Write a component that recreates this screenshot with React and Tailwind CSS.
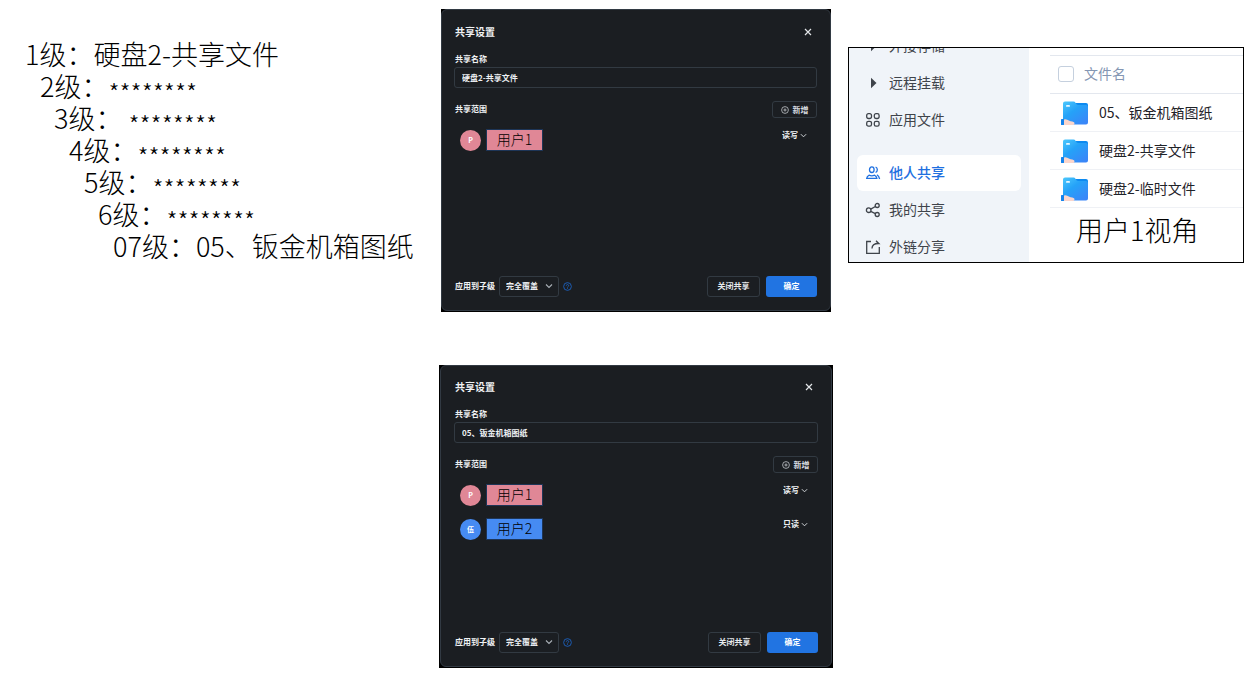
import React from "react";

const LEVELS = [
  { label: "1级：", value: "硬盘2-共享文件", indent: "pl-0" },
  { label: "2级：", stars: true, indent: "pl-[15px]" },
  { label: "3级：", stars: true, indent: "pl-[29px]", gap: "ml-1.5" },
  { label: "4级：", stars: true, indent: "pl-[44px]" },
  { label: "5级：", stars: true, indent: "pl-[59px]" },
  { label: "6级：", stars: true, indent: "pl-[73px]" },
  { label: "07级：", value: "05、钣金机箱图纸", indent: "pl-[88px]" },
];

function LevelList() {
  return (
    <ul className="pl-[25px] pt-[38px] text-[27px] leading-8 font-light text-black">
      {LEVELS.map((l) => (
        <li key={l.label} className={`flex whitespace-nowrap ${l.indent}`}>
          <span>{l.label}</span>
          {l.stars ? (
            <span className={`mt-3 h-5 text-[25px] leading-5 ${l.gap || ""}`}>********</span>
          ) : (
            <span>{l.value}</span>
          )}
        </li>
      ))}
    </ul>
  );
}

function Chevron({ className }) {
  return (
    <svg viewBox="0 0 8 8" className={className} fill="none" stroke="currentColor" strokeWidth="1.1" aria-hidden="true">
      <path d="M1 2.5 4 5.5 7 2.5" />
    </svg>
  );
}

function UserRow({ user }) {
  return (
    <li className="flex h-[34px] items-start justify-between">
      <div className="flex items-start">
        <span className={`mt-px flex size-[21px] items-center justify-center rounded-full text-[7px] font-bold text-white ${user.avatarClass}`}>
          {user.initial}
        </span>
        <span className={`ml-[5px] flex h-[22px] w-[57px] items-center justify-center border border-[#1d3557] pb-0.5 text-sm leading-none font-light text-black ${user.tagClass}`}>
          {user.name}
        </span>
      </div>
      <div className="relative mr-2.5 flex h-3 items-center">
        <select
          aria-label={`${user.name} 权限`}
          defaultValue={user.access}
          className="block h-3 w-[25px] appearance-none bg-transparent text-[8px] leading-3 font-bold text-[#eef1f4] outline-none"
        >
          <option>读写</option>
          <option>只读</option>
        </select>
        <Chevron className="pointer-events-none absolute top-[3px] right-0 size-[7px] text-[#d5dade]" />
      </div>
    </li>
  );
}

function ShareDialog({ id, name, users, className, panelClass }) {
  return (
    <section aria-labelledby={`${id}-title`} className={`bg-black ${className}`}>
      <div className={`flex h-full flex-col rounded-md border border-[#323a43] bg-[#1b1e22] ${panelClass}`}>
        <header className="flex h-[15px] items-center justify-between">
          <h2 id={`${id}-title`} className="pl-px text-[10px] leading-[15px] font-bold text-[#f0f2f4]">共享设置</h2>
          <button type="button" aria-label="关闭" className="mr-[5px] text-[#e3e6e9]">
            <svg viewBox="0 0 8 8" className="size-2" stroke="currentColor" strokeWidth="1.2" aria-hidden="true">
              <path d="M1 1 7 7M7 1 1 7" />
            </svg>
          </button>
        </header>
        <label htmlFor={`${id}-name`} className="mt-3.5 pl-px text-[8px] leading-3 font-bold text-[#f0f2f4]">共享名称</label>
        <input
          id={`${id}-name`}
          defaultValue={name}
          className="mt-0.5 h-[21px] w-full rounded-[3px] border border-[#323a42] bg-transparent px-[7px] text-[8px] font-bold text-[#eef1f4] outline-none"
        />
        <div className="mt-[13px] flex items-center justify-between">
          <h3 className="pb-0.5 pl-px text-[8px] leading-3 font-bold text-[#f0f2f4]">共享范围</h3>
          <button type="button" className="flex h-[17px] w-[45px] items-center justify-center gap-1 rounded-[3px] border border-[#323a42] text-[8px] leading-none font-bold text-[#d9dde1]">
            <svg viewBox="0 0 8 8" className="size-2" fill="none" stroke="currentColor" strokeWidth="0.7" aria-hidden="true">
              <circle cx="4" cy="4" r="3.4" />
              <path d="M4 2.4v3.2M2.4 4h3.2" />
            </svg>
            新增
          </button>
        </div>
        <ul className="mt-[11px] pl-1.5">
          {users.map((u) => (
            <UserRow key={u.name} user={u} />
          ))}
        </ul>
        <footer className="mt-auto flex h-[21px] items-center">
          <label htmlFor={`${id}-apply`} className="pb-0.5 pl-px text-[8px] font-bold text-[#f0f2f4]">应用到子级</label>
          <div className="relative ml-1">
            <select
              id={`${id}-apply`}
              className="block h-[21px] w-[60px] appearance-none rounded-[3px] border border-[#323a42] bg-transparent pb-0.5 pl-1.5 text-[8px] font-bold text-[#eef1f4] outline-none"
            >
              <option>完全覆盖</option>
            </select>
            <Chevron className="pointer-events-none absolute top-1.5 right-1.5 size-2 text-[#a9b0b7]" />
          </div>
          <button type="button" aria-label="帮助" className="ml-1 text-[#1d62bf]">
            <svg viewBox="0 0 10 10" className="size-[9px]" fill="none" stroke="currentColor" strokeWidth="1" aria-hidden="true">
              <circle cx="5" cy="5" r="4.3" />
              <path d="M3.7 4a1.3 1.3 0 1 1 2 1.100Q5 5.500 5 6.100M5 6.900v.8" />
            </svg>
          </button>
          <button type="button" className="ml-auto h-[21px] w-[53px] rounded-[3px] border border-[#323a42] pb-0.5 text-[8px] font-bold text-[#e6e9ec]">关闭共享</button>
          <button type="button" className="ml-1.5 h-[21px] w-[51px] rounded-[3px] bg-[#2174e2] pb-0.5 text-[8px] font-bold text-white">确定</button>
        </footer>
      </div>
    </section>
  );
}

const ICONS = {
  caret: <path d="M6 2.800 11.500 8l-5.500 5.200z" fill="currentColor" stroke="none" />,
  apps: (
    <>
      <rect x="1.700" y="1.700" width="4.800" height="4.800" rx="1.700" />
      <rect x="9.300" y="1.700" width="4.800" height="4.800" rx="1.700" />
      <rect x="1.700" y="9.300" width="4.800" height="4.800" rx="1.700" />
      <rect x="9.300" y="9.300" width="4.800" height="4.800" rx="1.700" />
    </>
  ),
  people: (
    <>
      <ellipse cx="6.800" cy="4.700" rx="2.300" ry="2.800" />
      <path d="M1.700 13.400c.2-1.500.9-2.400 2.300-3.200q2.800 1.300 5.600 0c1.400.8 2.100 1.700 2.300 3.200z" />
      <path d="M10.600 2c2.300 1 2.300 4.600 0 5.500M11.900 9.800c1.600.9 2.300 2.200 2.700 4.200" />
    </>
  ),
  share: (
    <>
      <circle cx="3.700" cy="8.200" r="2.300" />
      <circle cx="12.200" cy="3.500" r="2" />
      <circle cx="12.200" cy="12.500" r="2" />
      <path d="m5.700 7.100 4.700-2.600M5.700 9.300l4.700 2.300" />
    </>
  ),
  link: (
    <>
      <path d="M6 2.500H1.700v11.800h12.600V8" />
      <path d="M7 9.500c0-3.200 1.500-5 6.500-5M11 1.700l2.900 2.800H11" />
    </>
  ),
};

function NavItem({ icon, label, active }) {
  return (
    <a
      href="#"
      aria-current={active ? "page" : undefined}
      className={`flex h-9 shrink-0 items-center gap-2 rounded-md pl-2 text-sm ${active ? "bg-white font-medium text-[#1f70e0]" : "text-[#3f444b]"}`}
    >
      <svg viewBox="0 0 16 16" className="size-4" fill="none" stroke="currentColor" strokeWidth="1.300" aria-hidden="true">
        {ICONS[icon]}
      </svg>
      <span className="pb-0.5">{label}</span>
    </a>
  );
}

function FolderIcon() {
  return (
    <svg viewBox="0 0 28 26" className="h-[26px] w-7" aria-hidden="true">
      <defs>
        <linearGradient id="folder" x1="0" y1="0" x2="0.8" y2="1">
          <stop offset="0" stopColor="#4cc8fc" />
          <stop offset="0.450" stopColor="#25a2f8" />
          <stop offset="1" stopColor="#3a86f8" />
        </linearGradient>
      </defs>
      <path d="M14 3h11q2 0 2 2V12H14z" fill="#0d8af0" />
      <path d="M4 1.500h8.500q1.300 0 2 1.200l1 1.500q.6.800 1.700.8h7.800q2 0 2 2v15.500q0 2-2 2H4q-2 0-2-2V3.500q0-2 2-2z" fill="url(#folder)" />
      <rect x="5" y="5" width="4" height="1.800" rx=".9" fill="#e8f8ff" />
      <rect x="0" y="19" width="3" height="6" rx=".6" fill="#1583ec" />
      <path d="M3 19.600q1.500-.8 3.200.2l3.300 1.500q4 .3 4 2.100t-2.500 1.600h-8z" fill="#fbd6cc" />
    </svg>
  );
}

const FILES = ["05、钣金机箱图纸", "硬盘2-共享文件", "硬盘2-临时文件"];

function FileBrowser() {
  return (
    <section aria-label="用户1视角" className="mt-[47px] flex h-[216px] overflow-hidden border border-black bg-white">
      <nav className="flex w-[180px] shrink-0 flex-col bg-[#f0f4f9] px-2">
        <div className="-mt-5 flex flex-col gap-px">
          <NavItem icon="caret" label="外接存储" />
          <NavItem icon="caret" label="远程挂载" />
          <NavItem icon="apps" label="应用文件" />
        </div>
        <div className="mt-[17px] flex flex-col gap-px">
          <NavItem icon="people" label="他人共享" active />
          <NavItem icon="share" label="我的共享" />
          <NavItem icon="link" label="外链分享" />
        </div>
      </nav>
      <div className="min-w-0 flex-1 pt-[7px] pl-[21px]">
        <table className="w-full border-collapse text-left text-sm whitespace-nowrap">
          <thead>
            <tr className="h-[38px] border-y border-[#e3e7ee]">
              <th className="p-0 font-normal text-[#8496b3]">
                <label className="flex items-center gap-2.5 pb-px pl-2">
                  <input type="checkbox" className="size-4 appearance-none rounded-[3px] border border-[#c5d0de] bg-white" />
                  <span className="pb-0.5">文件名</span>
                </label>
              </th>
            </tr>
          </thead>
          <tbody>
            {FILES.map((f) => (
              <tr key={f} className="h-[38px] border-b border-[#eff1f5]">
                <td className="p-0 text-[#1f2329]">
                  <div className="flex items-center gap-2.5 pl-[11px]">
                    <FolderIcon />
                    <span className="pb-0.5">{f}</span>
                  </div>
                </td>
              </tr>
            ))}
          </tbody>
        </table>
        <p className="mt-1.5 pl-[26px] text-[27px] leading-8 font-light whitespace-nowrap text-black">用户1视角</p>
      </div>
    </section>
  );
}

const USER1 = { name: "用户1", initial: "P", access: "读写", avatarClass: "bg-[#e08796]", tagClass: "bg-[#e08796]" };
const USER2 = { name: "用户2", initial: "伍", access: "只读", avatarClass: "bg-[#468bf2]", tagClass: "bg-[#468bf2]" };

export default function App() {
  return (
    <main className="grid min-h-screen grid-cols-[minmax(0,1fr)_394px_396px] gap-x-[15px] bg-white pr-2.5 font-['Noto_Sans_CJK_SC',sans-serif]">
      <LevelList />
      <div className="flex flex-col gap-[53px] pt-[9px]">
        <ShareDialog
          id="disk"
          name="硬盘2-共享文件"
          users={[USER1]}
          className="mx-0.5 h-[303px] pb-px"
          panelClass="pt-3.5 pr-[13px] pb-[13px] pl-3"
        />
        <ShareDialog
          id="drawings"
          name="05、钣金机箱图纸"
          users={[USER1, USER2]}
          className="h-[303px] px-px pb-px"
          panelClass="pt-[13px] pr-[13px] pb-[13px] pl-[13px]"
        />
      </div>
      <FileBrowser />
    </main>
  );
}
